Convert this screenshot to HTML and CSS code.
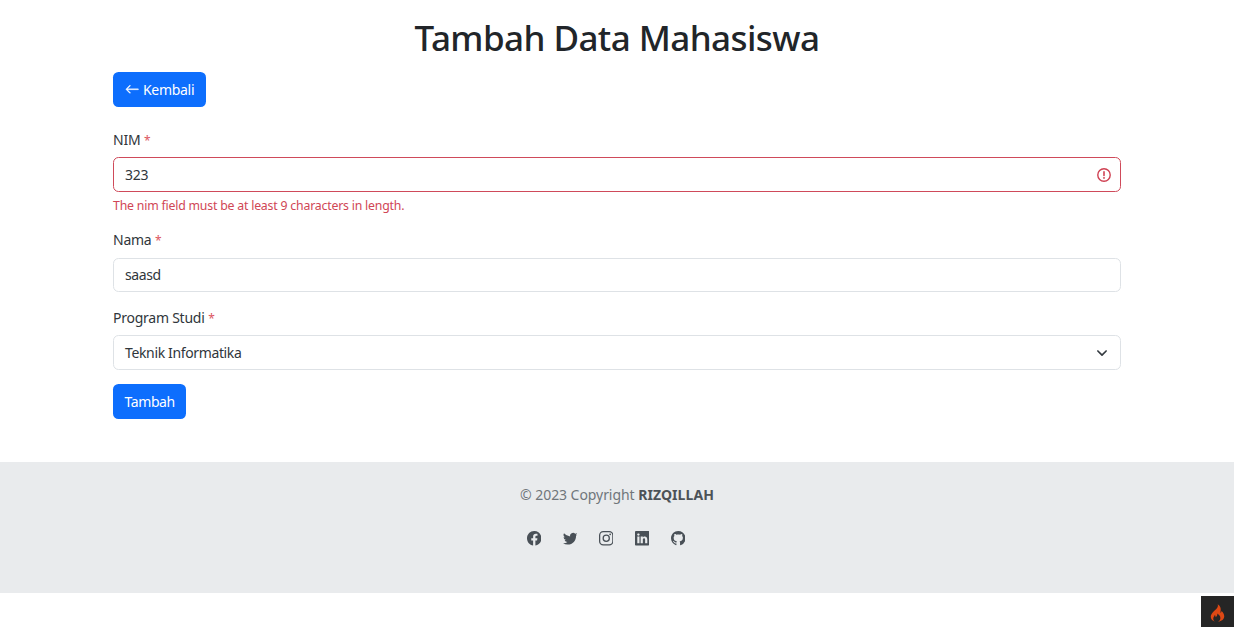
FILE: index.html
```html
<!DOCTYPE html>
<html lang="id">
<head>
<meta charset="utf-8">
<title>Tambah Data Mahasiswa</title>
<link rel="stylesheet" href="styles.css">
</head>
<body>
<main class="container">
  <h1 class="title"><span>Tambah Data Mahasiswa</span></h1>
  <a class="btn btn-back" href="#"><svg class="arrow" viewBox="0 0 16 16" fill="currentColor"><path stroke="currentColor" stroke-width=".4" fill-rule="evenodd" d="M15 8a.5.5 0 0 0-.5-.5H2.707l3.147-3.146a.5.5 0 1 0-.708-.708l-4 4a.5.5 0 0 0 0 .708l4 4a.5.5 0 0 0 .708-.708L2.707 8.5H14.500A.5.5 0 0 0 15 8z"/></svg><span class="t-kembali">Kembali</span></a>
  <form class="form">
    <div class="field field-nim">
      <label class="label"><span class="t-nim">NIM</span> <span class="req">*</span></label>
      <div class="control invalid"><span class="t-323">323</span>
        <svg class="alert" viewBox="0 0 16 16" fill="none" stroke="currentColor"><circle cx="8" cy="8" r="7.100" stroke-width="1.600"/><path d="M8 4.200v4.300" stroke-width="1.800" stroke-linecap="round"/><circle cx="8" cy="11.300" r=".7" stroke-width=".8" fill="currentColor"/></svg>
      </div>
      <div class="feedback"><span>The nim field must be at least 9 characters in length.</span></div>
    </div>
    <div class="field field-nama">
      <label class="label"><span class="t-nama">Nama</span> <span class="req">*</span></label>
      <div class="control"><span class="t-saasd">saasd</span></div>
    </div>
    <div class="field field-prodi">
      <label class="label"><span class="t-prodi">Program Studi</span> <span class="req">*</span></label>
      <div class="control"><span class="t-teknik">Teknik Informatika</span>
        <svg class="chevron" viewBox="0 0 16 16" fill="none" stroke="#343a40" stroke-width="2.200" stroke-linecap="round" stroke-linejoin="round"><path d="m2.500 5.300 5.500 5.500 5.500-5.500"/></svg>
      </div>
    </div>
    <button class="btn btn-submit" type="button"><span class="t-tambah">Tambah</span></button>
  </form>
</main>
<footer class="footer">
  <p class="copyright"><span class="copy">© 2023 Copyright</span> <b class="owner">RIZQILLAH</b></p>
  <div class="social">
    <svg viewBox="0 0 16 16"><path d="M16 8.049c0-4.446-3.582-8.05-8-8.05C3.58 0-.002 3.603-.002 8.05c0 4.017 2.926 7.347 6.75 7.951v-5.625h-2.03V8.05H6.75V6.275c0-2.017 1.195-3.131 3.022-3.131.876 0 1.791.157 1.791.157v1.98h-1.009c-.993 0-1.303.621-1.303 1.258v1.51h2.218l-.354 2.326H9.25V16c3.824-.604 6.75-3.934 6.75-7.951z"/></svg>
    <svg viewBox="0 0 16 16"><path d="M5.026 15c6.038 0 9.341-5.003 9.341-9.334 0-.14 0-.282-.006-.422A6.685 6.685 0 0 0 16 3.542a6.658 6.658 0 0 1-1.889.518 3.301 3.301 0 0 0 1.447-1.817 6.533 6.533 0 0 1-2.087.793A3.286 3.286 0 0 0 7.875 6.03a9.325 9.325 0 0 1-6.767-3.429 3.289 3.289 0 0 0 1.018 4.382A3.323 3.323 0 0 1 .64 6.575v.045a3.288 3.288 0 0 0 2.632 3.218 3.203 3.203 0 0 1-.865.115 3.23 3.23 0 0 1-.614-.057 3.283 3.283 0 0 0 3.067 2.277A6.588 6.588 0 0 1 .78 13.58a6.32 6.32 0 0 1-.78-.045A9.344 9.344 0 0 0 5.026 15z"/></svg>
    <svg viewBox="0 0 16 16"><rect x=".7" y=".7" width="14.6" height="14.6" rx="4" fill="none" stroke="currentColor" stroke-width="1.4"/><circle cx="8" cy="8" r="3.4" fill="none" stroke="currentColor" stroke-width="1.4"/><circle cx="12.3" cy="3.7" r=".96"/></svg>
    <svg viewBox="0 0 16 16"><path d="M0 1.146C0 .513.526 0 1.175 0h13.65C15.474 0 16 .513 16 1.146v13.708c0 .633-.526 1.146-1.175 1.146H1.175C.526 16 0 15.487 0 14.854V1.146zm4.943 12.248V6.169H2.542v7.225h2.401zm-1.2-8.212c.837 0 1.358-.554 1.358-1.248-.015-.709-.52-1.248-1.342-1.248-.822 0-1.359.54-1.359 1.248 0 .694.521 1.248 1.327 1.248h.016zm4.908 8.212V9.359c0-.216.016-.432.08-.586.173-.431.568-.878 1.232-.878.869 0 1.216.662 1.216 1.634v3.865h2.401V9.25c0-2.22-1.184-3.252-2.764-3.252-1.274 0-1.845.7-2.165 1.193v.025h-.016a5.54 5.54 0 0 1 .016-.025V6.169h-2.4c.03.678 0 7.225 0 7.225h2.4z"/></svg>
    <svg viewBox="0 0 16 16"><path d="M8 0C3.58 0 0 3.58 0 8c0 3.54 2.29 6.53 5.47 7.59.4.07.55-.17.55-.38 0-.19-.01-.82-.01-1.49-2.01.37-2.53-.49-2.69-.94-.09-.23-.48-.94-.82-1.13-.28-.15-.68-.52-.01-.53.63-.01 1.08.58 1.23.82.72 1.21 1.87.87 2.33.66.07-.52.28-.87.51-1.07-1.78-.2-3.64-.89-3.64-3.95 0-.87.31-1.59.82-2.15-.08-.2-.36-1.02.08-2.12 0 0 .67-.21 2.2.82.64-.18 1.32-.27 2-.27.68 0 1.36.09 2 .27 1.53-1.04 2.2-.82 2.2-.82.44 1.1.16 1.92.08 2.12.51.56.82 1.27.82 2.15 0 3.07-1.87 3.75-3.65 3.95.29.25.54.73.54 1.48 0 1.07-.01 1.93-.01 2.2 0 .21.15.46.55.38A8.012 8.012 0 0 0 16 8c0-4.42-3.58-8-8-8z"/></svg>
  </div>
</footer>
<div class="debug"><svg viewBox="0 0 16 20"><path d="M8.2.3C9.300 3.600 6.800 5.300 4.200 7.900 1.900 10.200.5 12 .5 14.300c0 2.500 1.700 4.500 4.700 5.400-1.500-1.100-2-2.200-1.900-3.500.1-1.500 1.200-2.500 1.700-3.900.8.8 1 1.500.8 2.400 1.700-1 2.300-2.300 1.900-4.100 2.100 1.200 3.500 2.800 3.500 4.900 0 1.900-.9 3.200-2.600 4.200 3.900-.5 6.900-2.700 6.900-6.100 0-2.500-1.500-4.300-3.100-6.200.2 1.300-.2 2-1.300 2.200C12.300 5.800 11.500 2.300 8.200.3z"/></svg></div>
</body>
</html>
```
FILE: styles.css
```css
* { box-sizing: border-box; }
body {
  margin: 0;
  height: 627px;
  overflow: hidden;
  background: #fff;
  color: #30363b;
  font: 14px/22px "Noto Sans", sans-serif;
}
.container { width: 1008px; height: 462px; margin: 0 auto; padding-top: 16px; }
.title {
  margin: 0 0 12px;
  color: #212529;
  font-size: 35px;
  font-weight: 500;
  letter-spacing: -.57px;
  line-height: 44px;
  text-align: center;
  white-space: nowrap;
}
.btn {
  display: flex;
  align-items: center;
  height: 35px;
  padding: 0 11.500px;
  border: 0;
  border-radius: 5.500px;
  background: #0d6efd;
  color: #fff;
  font: inherit;
  text-decoration: none;
  white-space: nowrap;
}
.btn-back { width: 93px; gap: 4px; }
.btn-submit { width: 73px; margin-top: 14px; }
.arrow { width: 14.500px; height: 14.500px; flex: none; }
.form { padding-top: 22px; }
.field-nama { margin-top: 13px; }
.field-prodi { margin-top: 15px; }
.label { display: block; height: 22px; margin-bottom: 6px; white-space: pre; }
.req { color: #dc5560; font-size: 12px; }
.t-kembali { letter-spacing: -.3px; }
.t-323, .t-nama, .t-nim, .t-prodi { letter-spacing: -.25px; }
.t-saasd, .t-tambah { letter-spacing: -.4px; }
.t-teknik { letter-spacing: -.36px; }
.control {
  display: flex;
  align-items: center;
  justify-content: space-between;
  height: 35px;
  padding: 0 11px;
  border: 1px solid #dee2e6;
  border-radius: 5.500px;
}
.field-nama .label { margin-bottom: 7px; }
.field-nama .control { height: 34px; }
.control.invalid { border-color: #cf4a5a; padding-right: 9px; }
.alert { width: 14px; height: 14px; color: #cf4052; }
.chevron { width: 12px; height: 12px; margin-right: 1px; }
.feedback {
  margin-top: 4px;
  color: #d04655;
  font-size: 12.300px;
  letter-spacing: -.2px;
  line-height: 20px;
}
.footer { height: 131px; padding-top: 22px; background: #e9ebed; color: #70767b; }
.copyright { margin: 0; text-align: center; white-space: nowrap; }
.copy { letter-spacing: -.06px; }
.owner { color: #4c5257; letter-spacing: .06px; }
.social { display: flex; gap: 21.600px; margin: 25px 0 0 526.500px; color: #495057; }
.social svg { width: 14.500px; height: 14.500px; fill: currentColor; }
.debug {
  position: fixed;
  right: 0;
  bottom: 0;
  display: flex;
  align-items: center;
  justify-content: center;
  width: 33px;
  height: 31px;
  padding-top: 2px;
  background: #252525;
}
.debug svg { width: 15px; height: 18px; fill: #dd4814; }
```
